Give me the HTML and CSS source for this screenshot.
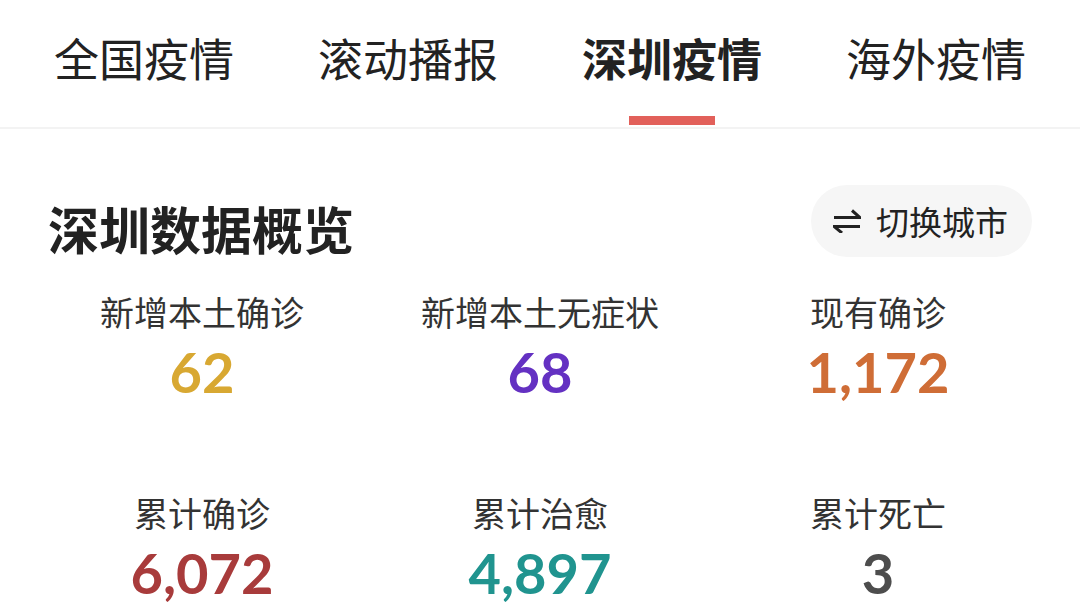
FILE: index.html
```html
<!DOCTYPE html>
<html lang="zh-CN">
<head>
<meta charset="utf-8">
<title>深圳疫情</title>
<link rel="stylesheet" href="styles.css">
</head>
<body>
<nav class="tabs">
  <div class="tab"><span class="tab-text">全国疫情</span></div>
  <div class="tab"><span class="tab-text">滚动播报</span></div>
  <div class="tab active"><span class="tab-text">深圳疫情</span><span class="tab-bar"></span></div>
  <div class="tab"><span class="tab-text">海外疫情</span></div>
</nav>
<section class="overview">
  <header class="overview-head">
    <h1 class="title">深圳数据概览</h1>
    <button class="switch">
      <svg class="switch-icon" viewBox="0 0 28 24" width="28" height="24">
        <path d="M1 8.5 H27 L19 1.5" fill="none" stroke="#222" stroke-width="3" stroke-linejoin="miter"/>
        <path d="M27 17.5 H1 L9 24" fill="none" stroke="#222" stroke-width="3" stroke-linejoin="miter"/>
      </svg>
      <span>切换城市</span>
    </button>
  </header>
  <div class="stats">
    <div class="stat"><div class="label">新增本土确诊</div><div class="num gold">62</div></div>
    <div class="stat"><div class="label">新增本土无症状</div><div class="num purple">68</div></div>
    <div class="stat"><div class="label">现有确诊</div><div class="num orange">1,172</div></div>
    <div class="stat"><div class="label">累计确诊</div><div class="num red">6,072</div></div>
    <div class="stat"><div class="label">累计治愈</div><div class="num teal">4,897</div></div>
    <div class="stat"><div class="label">累计死亡</div><div class="num gray">3</div></div>
  </div>
</section>
</body>
</html>
```

FILE: styles.css
```css
html, body {
  margin: 0;
  padding: 0;
  background: #ffffff;
}
body {
  width: 1080px;
  height: 607px;
  overflow: hidden;
  font-family: "Noto Sans CJK SC", "Noto Sans", sans-serif;
  color: #222;
}
.tabs {
  display: flex;
  padding: 0 12px;
  height: 127px;
  border-bottom: 2px solid #f3f3f3;
  box-sizing: content-box;
}
.tab {
  flex: 1;
  display: flex;
  flex-direction: column;
  align-items: center;
  padding-top: 33px;
}
.tab-text {
  font-size: 45px;
  line-height: 50px;
  color: #222;
}
.tab.active .tab-text {
  font-weight: 700;
}
.tab-bar {
  display: block;
  width: 86px;
  height: 9px;
  margin-top: 33px;
  background: #e2605a;
}
.overview {
  padding: 0 48px;
}
.overview-head {
  display: flex;
  justify-content: space-between;
  align-items: center;
  margin-top: 56px;
  height: 72px;
}
.title {
  margin: 0;
  padding-top: 14px;
  font-size: 51px;
  line-height: 60px;
  font-weight: 700;
  color: #222;
}
.switch {
  display: flex;
  align-items: center;
  gap: 15px;
  height: 72px;
  padding: 0 24px 0 22px;
  border: none;
  border-radius: 36px;
  background: #f6f6f6;
  font-family: "Noto Sans CJK SC", sans-serif;
  font-size: 33px;
  color: #222;
}
.switch-icon {
  display: block;
}
.stats {
  display: grid;
  grid-template-columns: repeat(3, 1fr);
  row-gap: 91px;
  margin: 35px -15px 0;
}
.stat {
  display: flex;
  flex-direction: column;
  align-items: center;
}
.label {
  font-size: 34px;
  line-height: 40px;
  color: #333;
}
.num {
  margin-top: 10px;
  font-family: "Lato", "Inter", sans-serif;
  font-weight: 700;
  font-size: 56px;
  line-height: 60px;
}
.gold { color: #d8a832; }
.purple { color: #6431c2; }
.orange { color: #cf6d36; }
.red { color: #a83b3b; }
.teal { color: #20948f; }
.gray { color: #4d4d4d; }
```
